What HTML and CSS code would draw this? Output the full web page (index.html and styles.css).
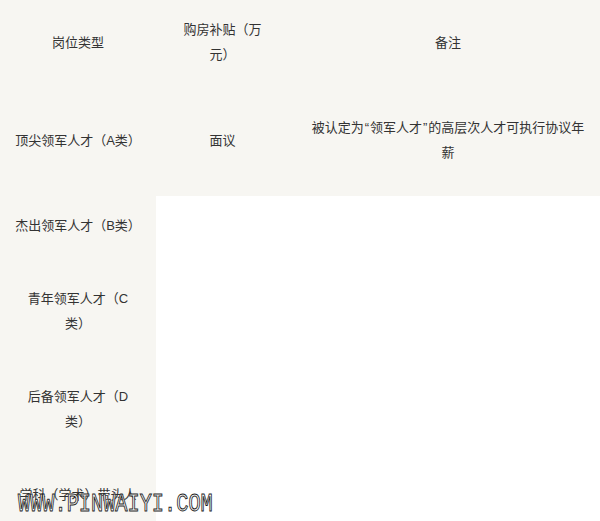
FILE: index.html
```html
<!DOCTYPE html>
<html lang="zh-CN">
<head>
<meta charset="utf-8">
<title>人才待遇</title>
<link rel="stylesheet" href="styles.css">
</head>
<body>
<div class="page">
  <table class="talent">
    <colgroup>
      <col class="c1">
      <col class="c2">
      <col class="c3">
    </colgroup>
    <tbody>
      <tr>
        <td class="cell">岗位类型</td>
        <td class="cell mid">购房补贴（万元）</td>
        <td class="cell note">备注</td>
      </tr>
      <tr>
        <td class="cell">顶尖领军人才（A类）</td>
        <td class="cell mid">面议</td>
        <td class="cell note">被认定为<span class="q">“</span>领军人才<span class="q">”</span>的高层次人才可执行协议年薪</td>
      </tr>
      <tr>
        <td class="cell">杰出领军人才（B类）</td>
      </tr>
      <tr>
        <td class="cell">青年领军人才（C类）</td>
      </tr>
      <tr>
        <td class="cell">后备领军人才（D类）</td>
      </tr>
      <tr>
        <td class="cell">学科（学术）带头人</td>
      </tr>
    </tbody>
  </table>
  <div class="watermark">WWW.PINWAIYI.COM</div>
</div>
</body>
</html>
```

FILE: styles.css
```css
html, body {
  margin: 0;
  padding: 0;
  height: 521px;
  overflow: hidden;
  background: #ffffff;
}

.page {
  position: relative;
  width: 600px;
  height: 521px;
  overflow: hidden;
}

.talent {
  table-layout: fixed;
  width: 600px;
  border-collapse: collapse;
  border-spacing: 0;
  font-family: "Liberation Sans", "Noto Sans CJK SC", sans-serif;
  font-size: 13px;
  line-height: 25px;
  color: #333333;
  text-spacing-trim: space-all;
  font-kerning: none;
}

.c1 { width: 156px; }
.c2 { width: 133px; }
.c3 { width: 311px; }

.cell {
  background: #f7f6f2;
  padding: 17px 15px 31px;
  text-align: center;
  vertical-align: middle;
  word-break: break-all;
}

.cell.mid {
  padding-left: 24px;
  padding-right: 24px;
}

.cell.note {
  padding-left: 22px;
  padding-right: 15px;
}

.q {
  font-family: "Liberation Sans", sans-serif;
  padding: 0 1px;
}

.watermark {
  position: absolute;
  left: 18px;
  top: 489px;
  font-family: "Liberation Mono", monospace;
  font-size: 26px;
  line-height: 30px;
  color: #ffffff;
  -webkit-text-stroke: 1px #1e1e1e;
  transform: scaleX(0.78);
  transform-origin: left top;
  white-space: nowrap;
}
```
